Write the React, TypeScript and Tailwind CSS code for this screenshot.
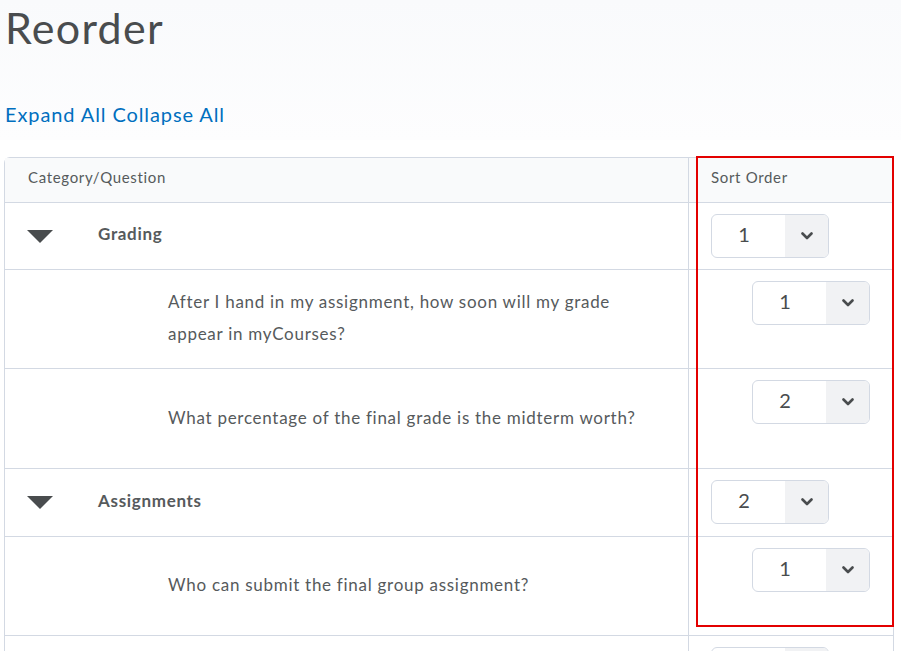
import React from "react"

type Row =
  | { kind: "cat"; label: string; order: number; h: string }
  | { kind: "q"; label: string; order: number; h: string }

const rows: Row[] = [
  { kind: "cat", label: "Grading", order: 1, h: "h-[67px]" },
  { kind: "q", label: "After I hand in my assignment, how soon will my grade appear in myCourses?", order: 1, h: "h-[99px]" },
  { kind: "q", label: "What percentage of the final grade is the midterm worth?", order: 2, h: "h-[100px]" },
  { kind: "cat", label: "Assignments", order: 2, h: "h-[68px]" },
  { kind: "q", label: "Who can submit the final group assignment?", order: 1, h: "h-[99px]" },
  { kind: "cat", label: "Exams", order: 3, h: "h-[68px]" },
]

const SortSelect = ({ value }: { value: number }) => (
  <div className="flex h-[44px] w-[118px] overflow-hidden rounded-md border border-[#d3d9e3] bg-white">
    <div className="flex flex-1 items-center justify-center pr-[8px] pb-[4px] text-[20px] text-[#494c4e]">{value}</div>
    <div className="flex w-[43px] items-center justify-center bg-[#f1f2f4]">
      <svg width="12" height="8" viewBox="0 0 12 8">
        <path d="M1.5 1.5 L6 6 L10.5 1.5" fill="none" stroke="#494c4e" strokeWidth="2.6" strokeLinecap="round" strokeLinejoin="round" />
      </svg>
    </div>
  </div>
)

export default function App() {
  return (
    <div
      className="relative min-h-[651px] bg-white tracking-[0.045em] text-[#565a5c] [font-variant-ligatures:none]"
      style={{ fontFamily: "Lato, 'Noto Sans', sans-serif" }}
    >
      {/* page header */}
      <div className="h-[140px] bg-gradient-to-b from-[#f9fafc] to-[#fdfdfe] pl-[5px]">
        <h1 className="text-[43px] leading-[56px] tracking-[0.03em] text-[#494c4e]">Reorder</h1>
        <div className="mt-[44px] flex gap-[6px] text-[20px] leading-[28px] tracking-[0.045em] text-[#006fbf]">
          <span>Expand All</span>
          <span>Collapse All</span>
        </div>
      </div>

      {/* table */}
      <div className="ml-[4px] mt-[17px] w-[890px] rounded-t-md border border-b-0 border-[#d3d9e3]">
        <div className="flex h-[45px] border-b border-[#d3d9e3] bg-[#f9fafb] text-[15px] tracking-[0.045em]">
          <div className="flex flex-1 items-center border-r border-[#d3d9e3] pb-[6px] pl-[23px]">Category/Question</div>
          <div className="flex w-[204px] items-center pb-[6px] pl-[22px]">Sort Order</div>
        </div>

        {rows.map((r, i) => (
          <div key={i} className={`flex border-b border-[#d3d9e3] ${r.h}`}>
            <div className="flex flex-1 items-center border-r border-[#d3d9e3]">
              {r.kind === "cat" ? (
                <>
                  <svg className="ml-[22px] mr-[45px]" width="26" height="13" viewBox="0 0 26 13">
                    <polygon points="0,0 26,0 13,13" fill="#494c4e" />
                  </svg>
                  <span className="pb-[4px] text-[17px] font-bold tracking-[0.04em]">{r.label}</span>
                </>
              ) : (
                <p className="ml-[163px] w-[485px] pb-[2px] text-[17px] leading-[32px]">{r.label}</p>
              )}
            </div>
            <div className={`w-[204px] pt-[11px] ${r.kind === "cat" ? "pl-[22px]" : "pl-[63px]"}`}>
              <SortSelect value={r.order} />
            </div>
          </div>
        ))}
      </div>

      {/* highlight box */}
      <div className="absolute left-[696px] top-[156px] h-[471px] w-[198px] border-2 border-[#e30000]" />
    </div>
  )
}
